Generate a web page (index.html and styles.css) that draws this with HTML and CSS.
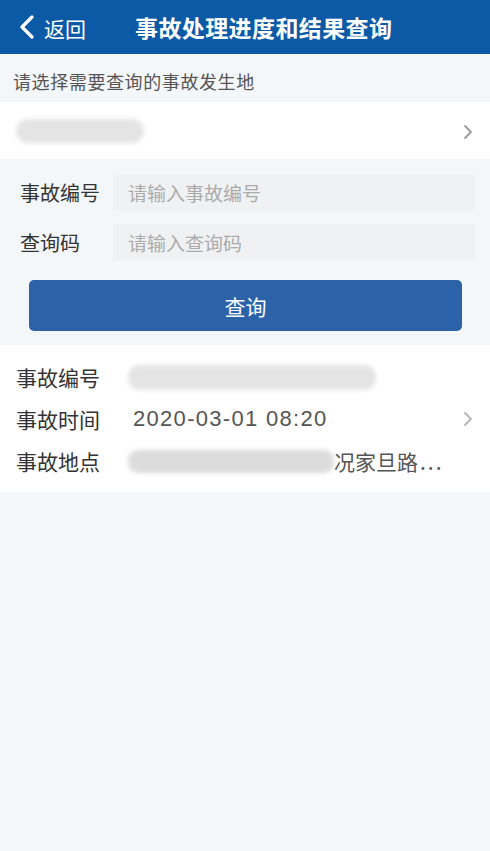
FILE: index.html
```html
<!DOCTYPE html>
<html lang="zh-CN">
<head>
  <meta charset="UTF-8">
  <meta name="viewport" content="width=device-width, initial-scale=1.0">
  <title>事故处理进度和结果查询</title>
  <link rel="stylesheet" href="styles.css">
</head>
<body>

  <!-- 顶部导航 -->
  <div class="header">
    <div class="back">
      <svg class="back-icon" width="16" height="24" viewBox="0 0 16 24">
        <path d="M13 2 L3 12 L13 22" fill="none" stroke="#fff" stroke-width="3.2" stroke-linecap="round" stroke-linejoin="round"/>
      </svg>
      <span>返回</span>
    </div>
    <div class="title">事故处理进度和结果查询</div>
  </div>

  <!-- 事故发生地 -->
  <div class="tip">请选择需要查询的事故发生地</div>
  <div class="place-row">
    <div class="blur blur-place"></div>
    <svg class="arrow" width="12" height="16" viewBox="0 0 12 16">
      <path d="M3 2 L9 8 L3 14" fill="none" stroke="#9a9a9a" stroke-width="1.8" stroke-linecap="round" stroke-linejoin="round"/>
    </svg>
  </div>

  <!-- 查询表单 -->
  <form class="query-form">
    <div class="field">
      <label>事故编号</label>
      <input type="text" placeholder="请输入事故编号">
    </div>
    <div class="field">
      <label>查询码</label>
      <input type="text" placeholder="请输入查询码">
    </div>
    <button type="button">查询</button>
  </form>

  <!-- 查询结果 -->
  <div class="result">
    <div class="result-row">
      <span class="key">事故编号</span>
      <span class="val"><span class="blur blur-no"></span></span>
    </div>
    <div class="result-row">
      <span class="key">事故时间</span>
      <span class="val num">2020-03-01 08:20</span>
      <svg class="arrow" width="12" height="16" viewBox="0 0 12 16">
        <path d="M3 2 L9 8 L3 14" fill="none" stroke="#b5b5b5" stroke-width="1.8" stroke-linecap="round" stroke-linejoin="round"/>
      </svg>
    </div>
    <div class="result-row">
      <span class="key">事故地点</span>
      <span class="val"><span class="blur blur-addr"></span>况家旦路<span class="dots">...</span></span>
    </div>
  </div>

</body>
</html>
```

FILE: styles.css
```css
* {
  box-sizing: border-box;
}

body {
  margin: 0;
  font-family: "Noto Sans CJK SC", "Noto Sans", sans-serif;
  background: #f4f7f9;
  color: #333;
}

.header {
  height: 54px;
  background: #0c59a6;
  color: #fff;
  display: flex;
  align-items: center;
  padding-left: 19px;
}

.back {
  display: flex;
  align-items: center;
  font-size: 21px;
  gap: 9px;
}

.back-icon {
  display: block;
}

.back span {
  margin-top: 2px;
}

.title {
  margin-left: 49px;
  font-size: 23px;
  font-weight: 700;
  letter-spacing: 0.4px;
}

.tip {
  height: 48px;
  line-height: 54px;
  padding-left: 13px;
  font-size: 18px;
  letter-spacing: 0.6px;
  color: #555;
}

.place-row {
  height: 57px;
  background: #fff;
  display: flex;
  align-items: center;
  justify-content: space-between;
  padding: 0 16px;
}

.arrow {
  display: block;
}

.place-row .arrow {
  margin-top: 2px;
}

.blur {
  display: inline-block;
  background: #e4e4e4;
  border-radius: 12px;
  filter: blur(2px);
}

.blur-place {
  width: 128px;
  height: 24px;
}

.query-form {
  padding: 15px 15px 14px 20px;
}

.field {
  display: flex;
  align-items: center;
  margin-bottom: 13px;
}

.field label {
  width: 93px;
  font-size: 20px;
  color: #333;
}

.field input {
  flex: 1;
  height: 37px;
  border: none;
  background: #f0f1f2;
  border-radius: 3px;
  padding: 0 15px;
  font-family: inherit;
  font-size: 19px;
  color: #333;
  outline: none;
}

.field input::placeholder {
  color: #ababab;
}

button {
  display: block;
  width: 433px;
  height: 51px;
  margin: 19px 0 0 9px;
  border: none;
  border-radius: 5px;
  background: #2c63a8;
  color: #fff;
  font-family: inherit;
  font-size: 21px;
  cursor: pointer;
}

.result {
  background: #fff;
  padding: 11px 16px 10px 16px;
}

.result-row {
  height: 42px;
  display: flex;
  align-items: center;
}

.key {
  width: 112px;
  font-size: 21px;
  color: #333;
}

.val {
  flex: 1;
  display: flex;
  align-items: center;
  font-size: 21px;
  color: #555;
}

.num {
  font-family: "Liberation Sans", Arial, sans-serif;
  font-size: 22px;
  letter-spacing: 1.3px;
  padding-left: 5px;
}

.dots {
  letter-spacing: 2px;
  padding-left: 2px;
}

.blur-no {
  width: 248px;
  height: 25px;
}

.blur-addr {
  width: 206px;
  height: 23px;
  border-radius: 10px;
  background: #dcdcdc;
}
```
